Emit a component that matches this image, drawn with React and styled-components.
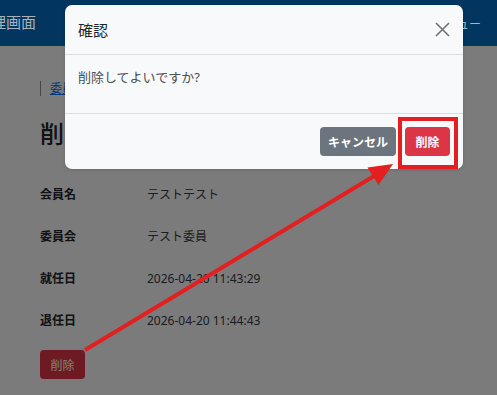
import React from 'react';
import styled, { createGlobalStyle } from 'styled-components';

const GlobalStyle = createGlobalStyle`
  html, body {
    margin: 0;
    padding: 0;
    background: #f6f6f8;
    font-family: "Noto Sans", "Noto Sans CJK JP", sans-serif;
  }
`;

const Page = styled.div`
  position: relative;
  width: 497px;
  height: 395px;
  overflow: hidden;
  background: #f6f6f8;
`;

const Header = styled.header`
  height: 46px;
  background: #023660;
  display: flex;
  justify-content: space-between;
  align-items: center;
  padding-right: 16px;
  overflow: hidden;
`;

const Brand = styled.div`
  font-size: 15px;
  color: #a9b3be;
  margin-left: -24px;
  margin-top: -3px;
  white-space: nowrap;
`;

const MenuLabel = styled.div`
  font-size: 12px;
  color: #a9b3be;
  margin-top: 2px;
`;

const Content = styled.main`
  height: 349px;
  padding: 34px 40px 0;
  box-sizing: border-box;
`;

const Breadcrumb = styled.div`
  display: flex;
  align-items: center;
  gap: 9px;
  height: 16px;
`;

const Divider = styled.span`
  width: 1px;
  height: 15px;
  background: #8a9096;
`;

const CrumbLink = styled.a`
  font-size: 12px;
  color: #0d6efd;
  text-decoration: underline;
`;

const Title = styled.h1`
  margin: 22px 0 0;
  font-size: 24px;
  font-weight: 500;
  color: #212529;
  line-height: 32px;
`;

const Rows = styled.dl`
  margin: 23px 0 0;
  display: grid;
  grid-template-columns: 107px 1fr;
  grid-auto-rows: 42px;
  align-items: center;
`;

const Label = styled.dt`
  font-size: 12px;
  font-weight: 700;
  color: #212529;
`;

const Value = styled.dd`
  margin: 0;
  font-size: 12px;
  color: #343a40;
`;

const Button = styled.button`
  height: 29px;
  padding: 0 ${(p) => (p.$variant === 'secondary' ? '8px' : '10.5px')};
  border: none;
  border-radius: 4px;
  font-family: inherit;
  font-size: 12px;
  font-weight: ${(p) => (p.$bold ? 700 : 400)};
  color: #fff;
  background: ${(p) => (p.$variant === 'secondary' ? '#6c757d' : '#dc3545')};
`;

const PageActions = styled.div`
  margin-top: 9px;
`;

const Backdrop = styled.div`
  position: absolute;
  top: 46px;
  left: 0;
  right: 0;
  bottom: 0;
  background: rgba(0, 0, 0, 0.5);
`;

const Modal = styled.div`
  position: absolute;
  left: 65px;
  top: 5px;
  width: 398px;
  background: #f8f9fa;
  border-radius: 7px;
  box-shadow: 0 1px 3px rgba(0, 0, 0, 0.15);
  display: flex;
  flex-direction: column;
`;

const ModalHeader = styled.div`
  height: 49px;
  padding: 0 13px;
  display: flex;
  align-items: center;
  justify-content: space-between;
  border-bottom: 1px solid #dcdfe2;
`;

const ModalTitle = styled.div`
  font-size: 15px;
  color: #212529;
`;

const CloseButton = styled.button`
  border: none;
  background: none;
  padding: 0;
  width: 16px;
  height: 16px;
  display: flex;
  align-items: center;
  justify-content: center;
`;

const ModalBody = styled.div`
  height: 59px;
  padding: 12px 13px 0;
  box-sizing: border-box;
  font-size: 13px;
  color: #495057;
  border-bottom: 1px solid #dcdfe2;
`;

const ModalFooter = styled.div`
  height: 55px;
  padding: 0 13px;
  box-sizing: border-box;
  display: flex;
  align-items: center;
  justify-content: flex-end;
  gap: 9px;
`;

const Highlight = styled.div`
  position: absolute;
  left: 398px;
  top: 117px;
  width: 60px;
  height: 52px;
  box-sizing: border-box;
  border: 4px solid #e41f1f;
`;

const Annotation = styled.svg`
  position: absolute;
  left: 0;
  top: 0;
  pointer-events: none;
`;

const details = [
  ['会員名', 'テストテスト'],
  ['委員会', 'テスト委員'],
  ['就任日', '2026-04-20 11:43:29'],
  ['退任日', '2026-04-20 11:44:43'],
];

function App() {
  return (
    <Page>
      <GlobalStyle />
      <Header>
        <Brand>管理画面</Brand>
        <MenuLabel>メニュー</MenuLabel>
      </Header>
      <Content>
        <Breadcrumb>
          <Divider />
          <CrumbLink>委員会一覧</CrumbLink>
        </Breadcrumb>
        <Title>削除確認</Title>
        <Rows>
          {details.map(([label, value]) => (
            <React.Fragment key={label}>
              <Label>{label}</Label>
              <Value>{value}</Value>
            </React.Fragment>
          ))}
        </Rows>
        <PageActions>
          <Button>削除</Button>
        </PageActions>
      </Content>
      <Backdrop />

      <Modal>
        <ModalHeader>
          <ModalTitle>確認</ModalTitle>
          <CloseButton aria-label="close">
            <svg width="15" height="15" viewBox="0 0 15 15">
              <path d="M1 1L14 14M14 1L1 14" stroke="#6c7278" strokeWidth="1.6" />
            </svg>
          </CloseButton>
        </ModalHeader>
        <ModalBody>削除してよいですか?</ModalBody>
        <ModalFooter>
          <Button $variant="secondary" $bold>キャンセル</Button>
          <Button $bold>削除</Button>
        </ModalFooter>
      </Modal>

      <Highlight />
      <Annotation width="497" height="395" viewBox="0 0 497 395">
        <line x1="85" y1="350" x2="375" y2="175.5" stroke="#e41f1f" strokeWidth="4" />
        <polygon points="393,164 378.5,185 367.5,167.5" fill="#e41f1f" />
      </Annotation>
    </Page>
  );
}

export default App;
